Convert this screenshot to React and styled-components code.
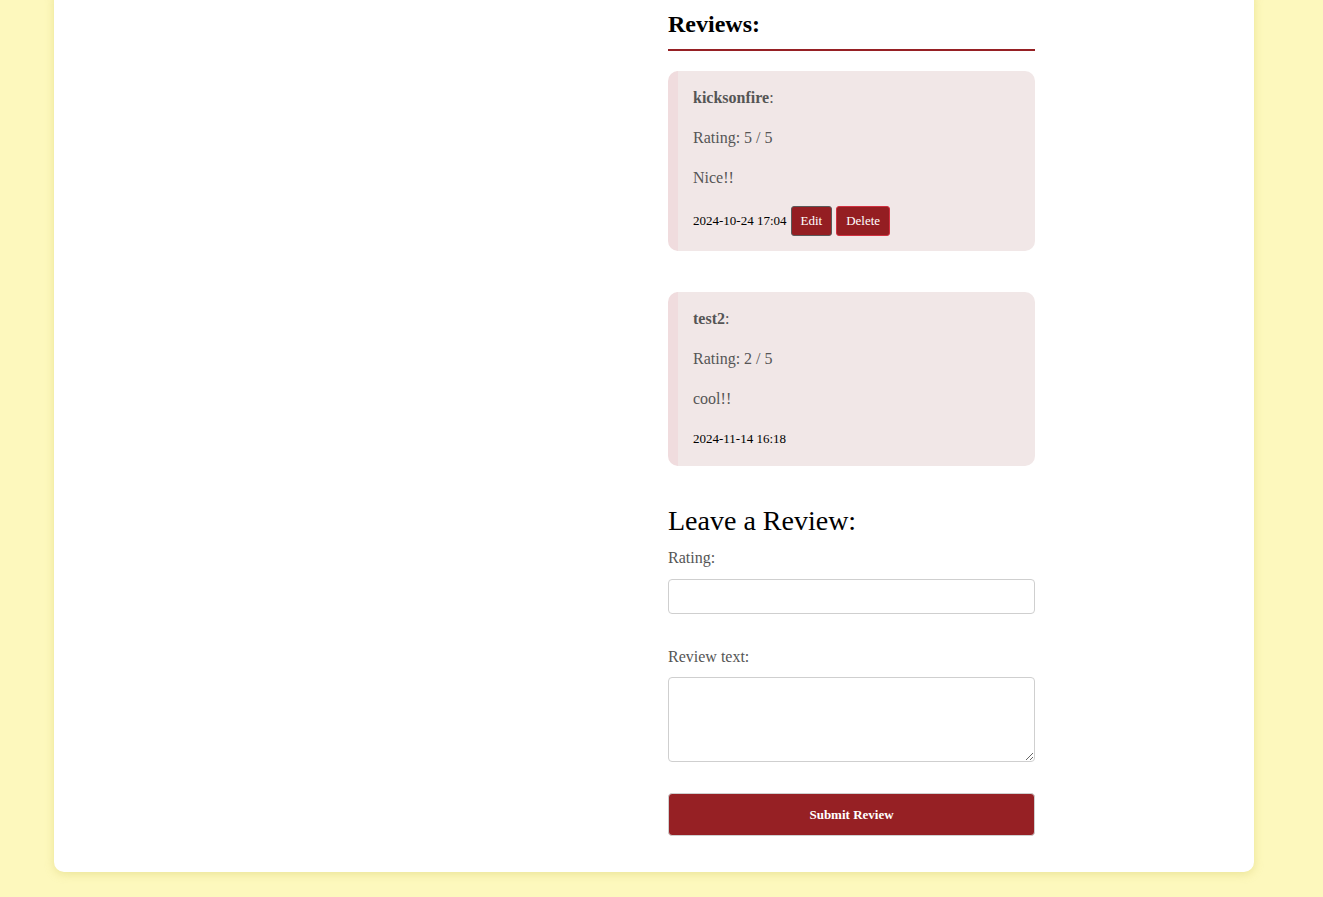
import React from "react";
import styled, { createGlobalStyle } from "styled-components";

const GlobalStyle = createGlobalStyle`
  body {
    margin: 0;
    background: #fdf8bd;
    font-family: "Liberation Serif", "Times New Roman", serif;
  }
`;

const Page = styled.div`
  padding: 0 69px 26px 54px;
`;

const Card = styled.main`
  margin-top: -12px;
  background: #ffffff;
  border-radius: 10px;
  box-shadow: 0 2px 10px rgba(200, 190, 80, 0.35);
  display: flex;
  padding: 0 219px 36px 0;
`;

const Spacer = styled.div`
  flex: 1;
`;

const Column = styled.section`
  width: 367px;
  padding-top: 12px;
`;

const SectionTitle = styled.h2`
  margin: 0;
  font-size: 24px;
  line-height: 26px;
  font-weight: bold;
  color: #000;
  padding: 11px 0 12px;
  border-bottom: 2px solid #962024;
`;

const ReviewList = styled.div`
  display: flex;
  flex-direction: column;
  gap: 41px;
  margin-top: 20px;
`;

const ReviewCard = styled.article`
  background: #f1e7e7;
  border-left: 10px solid #f0dcde;
  border-radius: 10px;
  padding: 15px;
`;

const Line = styled.p`
  margin: 0 0 16px;
  font-size: 16px;
  line-height: 24px;
  color: #555;
`;

const MetaRow = styled.div`
  display: flex;
  align-items: center;
  gap: 4px;
  height: ${(p) => (p.$tall ? "30px" : "24px")};
  font-size: 13px;
  color: #000;
`;

const SmallButton = styled.button`
  font-family: "Liberation Serif", "Times New Roman", serif;
  font-size: 13px;
  color: #fff;
  background: #941e22;
  border: 1px solid ${(p) => (p.$focus ? "#5a5a5a" : "#d03040")};
  border-radius: 3px;
  height: 30px;
  padding: 0 9px;
  cursor: pointer;
`;

const FormTitle = styled.h2`
  margin: 37px 0 0;
  font-size: 28px;
  line-height: 36px;
  font-weight: normal;
  color: #000;
`;

const Label = styled.label`
  display: block;
  margin-top: ${(p) => p.$top || "10px"};
  font-size: 16px;
  line-height: 18px;
  color: #555;
`;

const Input = styled.input`
  display: block;
  box-sizing: border-box;
  width: 100%;
  height: 35px;
  margin-top: 12px;
  border: 1px solid #cfcfcf;
  border-radius: 4px;
`;

const TextArea = styled.textarea`
  display: block;
  box-sizing: border-box;
  width: 100%;
  height: 85px;
  margin-top: 11px;
  border: 1px solid #cfcfcf;
  border-radius: 4px;
`;

const Submit = styled.button`
  display: block;
  width: 100%;
  height: 43px;
  margin-top: 31px;
  background: #962024;
  color: #fff;
  border: 1px solid #cfcfcf;
  border-radius: 4px;
  font-family: "Liberation Serif", "Times New Roman", serif;
  font-size: 13px;
  font-weight: bold;
`;

const reviews = [
  { user: "kicksonfire", rating: 5, text: "Nice!!", date: "2024-10-24 17:04", own: true },
  { user: "test2", rating: 2, text: "cool!!", date: "2024-11-14 16:18", own: false },
];

export default function App() {
  return (
    <Page>
      <GlobalStyle />
      <Card>
        <Spacer />
        <Column>
          <SectionTitle>Reviews:</SectionTitle>
          <ReviewList>
            {reviews.map((r) => (
              <ReviewCard key={r.user}>
                <Line>
                  <strong>{r.user}</strong>:
                </Line>
                <Line>Rating: {r.rating} / 5</Line>
                <Line>{r.text}</Line>
                <MetaRow $tall={r.own}>
                  <span>{r.date}</span>
                  {r.own && (
                    <>
                      <SmallButton $focus>Edit</SmallButton>
                      <SmallButton>Delete</SmallButton>
                    </>
                  )}
                </MetaRow>
              </ReviewCard>
            ))}
          </ReviewList>
          <FormTitle>Leave a Review:</FormTitle>
          <Label>Rating:</Label>
          <Input type="number" />
          <Label $top="34px">Review text:</Label>
          <TextArea />
          <Submit>Submit Review</Submit>
        </Column>
      </Card>
    </Page>
  );
}
